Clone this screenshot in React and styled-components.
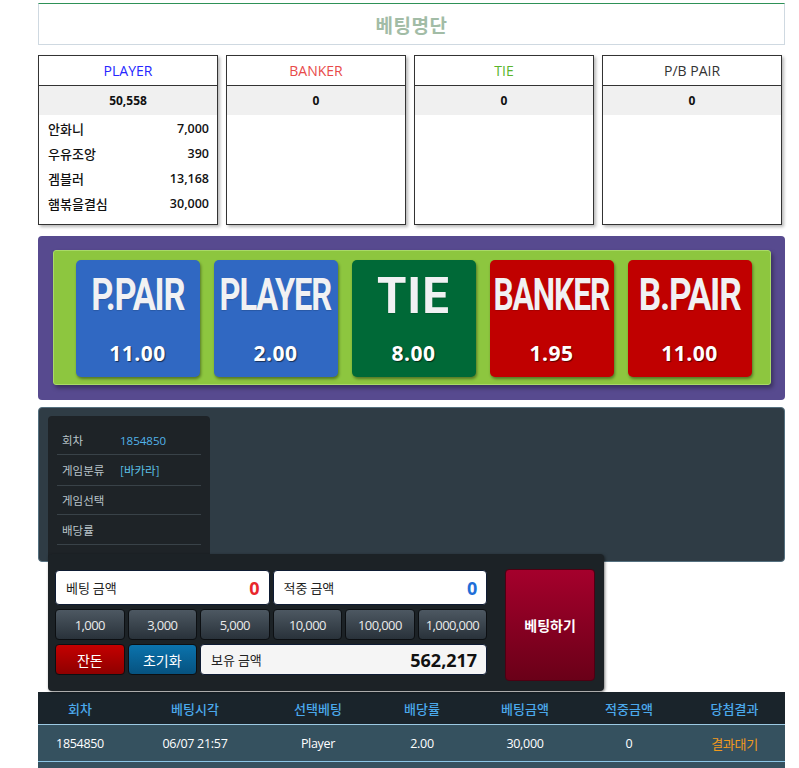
import React from "react";
import styled, { createGlobalStyle } from "styled-components";

const Global = createGlobalStyle`
  html, body { margin: 0; padding: 0; background: #fff; }
  body { font-family: "Open Sans", "Noto Sans CJK KR", sans-serif; color: #111; }
  * { box-sizing: border-box; }
`;

const KR = `"Noto Sans CJK KR", "Noto Sans", sans-serif`;
const LAT = `"Open Sans", "Noto Sans CJK KR", sans-serif`;

const Page = styled.div`
  width: 747px;
  margin: 3px 0 0 38px;
  display: flex;
  flex-direction: column;
`;

const TitleBar = styled.div`
  height: 42px;
  border: 1px solid #cfd9e1;
  border-top: 1px solid #2e9157;
  display: flex;
  align-items: center;
  justify-content: center;
  font-family: ${KR};
  font-weight: 700;
  font-size: 19px;
  color: #a2bca6;
  letter-spacing: 0.5px;
`;

const Boards = styled.div`
  display: grid;
  grid-template-columns: repeat(4, 180px);
  column-gap: 8px;
  margin-top: 10px;
`;

const Board = styled.div`
  height: 170px;
  border: 1px solid #333;
  box-shadow: 2px 2px 3px rgba(0, 0, 0, 0.28);
  background: #fff;
  display: flex;
  flex-direction: column;
`;

const BoardHead = styled.div`
  height: 30px;
  border-bottom: 1px solid #333;
  display: flex;
  align-items: center;
  justify-content: center;
  font-family: ${LAT};
  font-size: 14px;
  color: ${(p) => p.$color};
`;

const BoardSum = styled.div`
  height: 29px;
  background: #f0f0f0;
  display: flex;
  align-items: center;
  justify-content: center;
  font-family: ${LAT};
  font-weight: 700;
  font-size: 12px;
`;

const BoardList = styled.div`
  padding: 1px 8px 0 9px;
  display: flex;
  flex-direction: column;
`;

const BoardRow = styled.div`
  height: 25px;
  display: flex;
  align-items: center;
  justify-content: space-between;
  font-size: 13px;
  & > span:first-child { font-family: ${KR}; font-weight: 500; }
  & > span:last-child { font-family: ${LAT}; font-weight: 600; font-size: 12.5px; }
`;

const Purple = styled.div`
  margin-top: 11px;
  height: 164px;
  background: #574a8f;
  border-radius: 4px;
  padding: 14px 14px 15px 15px;
`;

const Green = styled.div`
  height: 135px;
  background: #8dc63f;
  border: 1px solid #a9d968;
  border-radius: 3px;
  box-shadow: 2px 3px 4px rgba(0, 0, 0, 0.35);
  display: flex;
  justify-content: center;
  gap: 14px;
  padding-top: 9px;
  padding-left: 3px;
`;

const BetBtn = styled.div`
  width: 124px;
  height: 117px;
  background: ${(p) => p.$bg};
  border-radius: 5px;
  box-shadow: 1px 2px 3px rgba(0, 0, 0, 0.4);
  display: flex;
  flex-direction: column;
  align-items: center;
  overflow: hidden;
`;

const BetLabel = styled.div`
  height: 70px;
  width: 100%;
  display: flex;
  align-items: center;
  justify-content: center;
  padding-top: ${(p) => (p.$big ? "2px" : "0")};
  & > span {
    display: inline-block;
    font-family: "Roboto", "Liberation Sans", sans-serif;
    font-weight: 700;
    font-size: ${(p) => (p.$big ? "50px" : "44px")};
    letter-spacing: ${(p) => (p.$big ? "1px" : "-1.5px")};
    color: #f1f1f3;
    transform: scaleX(${(p) => p.$sx});
    white-space: nowrap;
    text-shadow: 0 1px 1px rgba(0, 0, 0, 0.15);
  }
`;

const Odds = styled.div`
  margin-top: 9px;
  font-family: ${LAT};
  font-weight: 700;
  font-size: 21px;
  color: #fff;
  letter-spacing: 0.5px;
  text-shadow: 1px 1px 1px rgba(0, 0, 0, 0.55);
`;

const Dark = styled.div`
  margin-top: 7px;
  height: 155px;
  background: #2f3c45;
  border: 1px solid #55707f;
  border-radius: 4px;
  padding: 8px 0 0 9px;
`;

const InfoCard = styled.div`
  width: 162px;
  height: 145px;
  background: #1e2327;
  border-radius: 4px;
  padding: 10px 9px 0 9px;
  display: flex;
  flex-direction: column;
`;

const InfoRow = styled.div`
  height: ${(p) => p.$h}px;
  border-bottom: 1px solid #394248;
  display: flex;
  align-items: center;
  font-family: ${KR};
  font-size: 11.5px;
  & > span:first-child { width: 63px; padding-left: 5px; color: #b9c3c9; }
  & > span:last-child { color: #52b3ea; font-family: ${LAT}; }
  & > span.kr { font-family: ${KR} !important; color: #5cc1e6 !important; }
`;

const Control = styled.div`
  position: relative;
  z-index: 2;
  margin: -8px 0 0 10px;
  width: 556px;
  height: 137px;
  background: #1c2226;
  border-radius: 4px;
  box-shadow: 1px 1px 3px rgba(0, 0, 0, 0.5);
  padding: 16px 9px 0 7px;
  display: flex;
  gap: 18px;
`;

const Grid = styled.div`
  width: 433px;
  display: grid;
  grid-template-columns: repeat(6, 1fr);
  grid-template-rows: 35px 31px 31px;
  column-gap: 3px;
  row-gap: 4px;
`;

const AmountBox = styled.div`
  grid-column: span ${(p) => p.$span};
  background: ${(p) => p.$bg || "#fff"};
  border: 1px solid #0e1b33;
  border-radius: 4px;
  display: flex;
  align-items: center;
  justify-content: space-between;
  padding: 0 9px 0 10px;
  & > span:first-child { font-family: ${KR}; font-size: 13px; color: #222; }
  & > span:last-child {
    font-family: ${LAT};
    font-weight: 700;
    font-size: ${(p) => p.$vs || 18}px;
    color: ${(p) => p.$vc || "#111"};
  }
`;

const Chip = styled.div`
  background: linear-gradient(#4d5862, #29323a);
  border: 1px solid #0c0f12;
  border-radius: 4px;
  display: flex;
  align-items: center;
  justify-content: center;
  font-family: ${LAT};
  font-size: 13px;
  letter-spacing: -0.6px;
  color: #eaeaea;
`;

const ActionBtn = styled.div`
  background: ${(p) => p.$bg};
  border: 1px solid #0c0f12;
  border-radius: 4px;
  display: flex;
  align-items: center;
  justify-content: center;
  font-family: ${KR};
  font-size: 14px;
  color: #fff;
`;

const BetGo = styled.div`
  width: 90px;
  height: 112px;
  margin-top: -1px;
  background: linear-gradient(#a5002c, #6a0018);
  border: 1px solid #4d0012;
  border-radius: 4px;
  display: flex;
  align-items: center;
  justify-content: center;
  font-family: ${KR};
  font-weight: 700;
  font-size: 14px;
  color: #fff;
`;

const Table = styled.div`
  margin-top: 1px;
  display: flex;
  flex-direction: column;
`;

const cols = "84px 146px 100px 108px 98px 110px 101px";

const THead = styled.div`
  display: grid;
  grid-template-columns: ${cols};
  height: 33px;
  background: #1a242b;
  border-bottom: 1px solid #9ccae4;
  align-items: center;
  & > div {
    text-align: center;
    font-family: ${KR};
    font-size: 13px;
    font-weight: 500;
    color: #4ba9ec;
  }
`;

const TRow = styled.div`
  display: grid;
  grid-template-columns: ${cols};
  height: 37px;
  background: #35515f;
  border-bottom: 1px solid #8cc6e6;
  align-items: center;
  & > div {
    text-align: center;
    font-family: ${LAT};
    font-size: 12.5px;
    letter-spacing: -0.3px;
    color: #fff;
  }
`;

const Result = styled.div`
  font-family: ${KR} !important;
  color: #f29a1c !important;
  font-size: 13px !important;
`;

const boards = [
  { title: "PLAYER", color: "#2626ff", sum: "50,558", rows: [["안화니", "7,000"], ["우유조앙", "390"], ["겜블러", "13,168"], ["햄볶을결심", "30,000"]] },
  { title: "BANKER", color: "#e84a4a", sum: "0", rows: [] },
  { title: "TIE", color: "#5ab52c", sum: "0", rows: [] },
  { title: "P/B PAIR", color: "#333", sum: "0", rows: [] },
];

const bets = [
  { label: "P.PAIR", odds: "11.00", bg: "#3068c2", sx: 0.78 },
  { label: "PLAYER", odds: "2.00", bg: "#3068c2", sx: 0.74 },
  { label: "TIE", odds: "8.00", bg: "#006937", sx: 0.95, big: true },
  { label: "BANKER", odds: "1.95", bg: "#c00000", sx: 0.72 },
  { label: "B.PAIR", odds: "11.00", bg: "#c00000", sx: 0.8 },
];

const chips = ["1,000", "3,000", "5,000", "10,000", "100,000", "1,000,000"];

export default function App() {
  return (
    <>
      <Global />
      <Page>
        <TitleBar>베팅명단</TitleBar>
        <Boards>
          {boards.map((b) => (
            <Board key={b.title}>
              <BoardHead $color={b.color}>{b.title}</BoardHead>
              <BoardSum>{b.sum}</BoardSum>
              <BoardList>
                {b.rows.map(([n, v]) => (
                  <BoardRow key={n}>
                    <span>{n}</span>
                    <span>{v}</span>
                  </BoardRow>
                ))}
              </BoardList>
            </Board>
          ))}
        </Boards>
        <Purple>
          <Green>
            {bets.map((b) => (
              <BetBtn key={b.label} $bg={b.bg}>
                <BetLabel $sx={b.sx} $big={b.big}>
                  <span>{b.label}</span>
                </BetLabel>
                <Odds>{b.odds}</Odds>
              </BetBtn>
            ))}
          </Green>
        </Purple>
        <Dark>
          <InfoCard>
            <InfoRow $h={29}>
              <span>회차</span>
              <span>1854850</span>
            </InfoRow>
            <InfoRow $h={31}>
              <span>게임분류</span>
              <span className="kr">[바카라]</span>
            </InfoRow>
            <InfoRow $h={29}>
              <span>게임선택</span>
              <span></span>
            </InfoRow>
            <InfoRow $h={30}>
              <span>배당률</span>
              <span></span>
            </InfoRow>
          </InfoCard>
        </Dark>
        <Control>
          <Grid>
            <AmountBox $span={3} $vc="#e8262c">
              <span>베팅 금액</span>
              <span>0</span>
            </AmountBox>
            <AmountBox $span={3} $vc="#1f6fd8">
              <span>적중 금액</span>
              <span>0</span>
            </AmountBox>
            {chips.map((c) => (
              <Chip key={c}>{c}</Chip>
            ))}
            <ActionBtn $bg="linear-gradient(#c40000, #8e0000)">잔돈</ActionBtn>
            <ActionBtn $bg="linear-gradient(#0b73ad, #06527f)">초기화</ActionBtn>
            <AmountBox $span={4} $bg="#f5f5f5">
              <span>보유 금액</span>
              <span>562,217</span>
            </AmountBox>
          </Grid>
          <BetGo>베팅하기</BetGo>
        </Control>
        <Table>
          <THead>
            <div>회차</div>
            <div>베팅시각</div>
            <div>선택베팅</div>
            <div>배당률</div>
            <div>베팅금액</div>
            <div>적중금액</div>
            <div>당첨결과</div>
          </THead>
          <TRow>
            <div>1854850</div>
            <div>06/07 21:57</div>
            <div>Player</div>
            <div>2.00</div>
            <div>30,000</div>
            <div>0</div>
            <Result>결과대기</Result>
          </TRow>
          <TRow>
            <div></div>
            <div></div>
            <div></div>
            <div></div>
            <div></div>
            <div></div>
            <div></div>
          </TRow>
        </Table>
      </Page>
    </>
  );
}
